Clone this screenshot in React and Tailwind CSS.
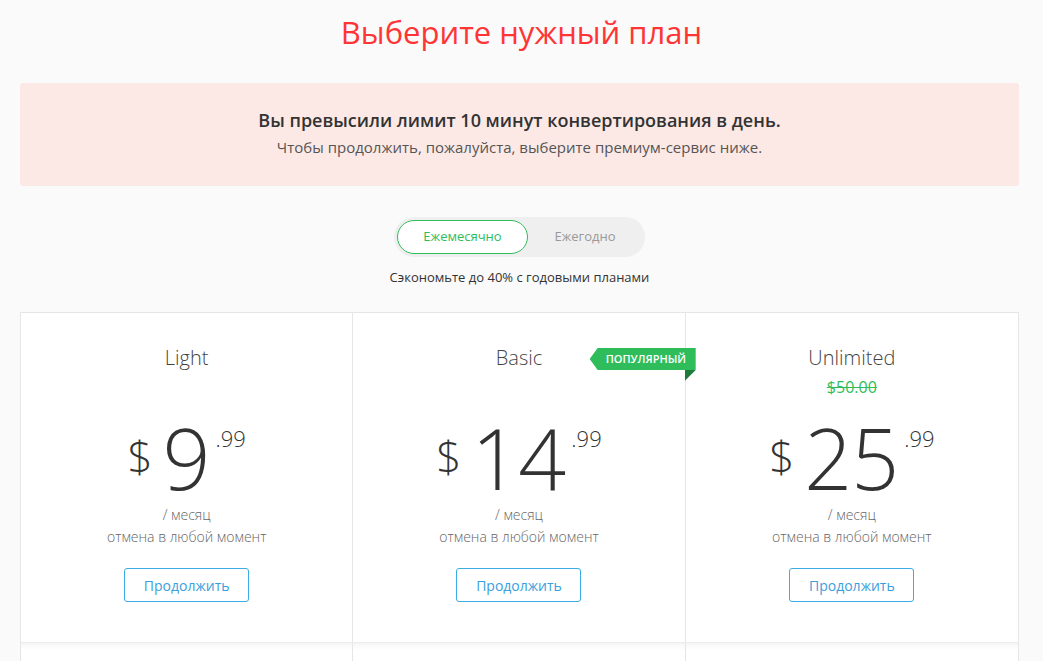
import { useState } from 'react';

const plans = [
  { name: 'Light', price: '9', old: null, popular: false },
  { name: 'Basic', price: '14', old: null, popular: true },
  { name: 'Unlimited', price: '25', old: '$50.00', popular: false },
];

function PopularBadge() {
  return (
    <div className="absolute top-[35px] right-[-11px] z-10">
      <div className="h-[22px] w-[106px] bg-[#2fbd5b] pl-[16px] text-[11px] leading-[22px] font-semibold text-white [clip-path:polygon(8px_0,100%_0,100%_100%,8px_100%,0_50%)]">
        ПОПУЛЯРНЫЙ
      </div>
      <div className="ml-auto h-[11px] w-[11px] bg-[#1c7a3a] [clip-path:polygon(0_0,100%_0,0_100%)]" />
    </div>
  );
}

function PlanCard({ plan, last }) {
  return (
    <div className={`relative flex flex-col items-center bg-white pt-[31px] pb-[40px] ${last ? '' : 'border-r border-[#e6e6e6]'}`}>
      {plan.popular && <PopularBadge />}
      <div className="text-[20px] leading-[28px] font-light text-[#444]">{plan.name}</div>
      <div className="h-[24px] mt-[3px] text-[16px] leading-[24px] text-[#2fbd5b] line-through">{plan.old}</div>
      <div className="mt-[17px] flex h-[84px] items-start text-[#333] font-light">
        <span className="mt-[18px] text-[44px] leading-none">$</span>
        <span className="ml-[10px] text-[84px] leading-none tracking-[-1px]">{plan.price}</span>
        <span className="ml-[6px] mt-[11px] text-[22px] leading-none">.99</span>
      </div>
      <div className="mt-[4px] text-center text-[14px] leading-[22px] font-light text-[#666]">
        <div>/ месяц</div>
        <div>отмена в любой момент</div>
      </div>
      <button className="mt-[20px] h-[34px] w-[125px] rounded-[3px] border border-[#3aaee2] text-[14px] text-[#3aa0dc]">
        Продолжить
      </button>
    </div>
  );
}

export default function App() {
  const [period, setPeriod] = useState('month');

  return (
    <div className="min-h-[661px] bg-[#fafafa] font-['Open_Sans',sans-serif] overflow-hidden">
      <h1 className="pt-[12px] text-center text-[31px] leading-[40px] text-[#ff3535]">Выберите нужный план</h1>

      <div className="ml-[20px] w-[999px]">
        <div className="mt-[31px] h-[103px] rounded-[3px] bg-[#fce9e6] pb-[4px] flex flex-col items-center justify-center">
          <div className="text-[18px] leading-[24px] font-semibold text-[#333]">
            Вы превысили лимит 10 минут конвертирования в день.
          </div>
          <div className="mt-[5px] text-[15px] leading-[20px] text-[#555]">
            Чтобы продолжить, пожалуйста, выберите премиум-сервис ниже.
          </div>
        </div>

        <div className="mt-[31px] flex justify-center">
          <div className="flex h-[40px] w-[251px] items-center rounded-full bg-[#efefef] p-[3px]">
            <button
              onClick={() => setPeriod('month')}
              className={`h-[34px] w-[131px] rounded-full text-[13px] ${period === 'month' ? 'bg-white border border-[#2fbd5b] text-[#2fbd5b]' : 'text-[#999]'}`}
            >
              Ежемесячно
            </button>
            <button
              onClick={() => setPeriod('year')}
              className={`h-[34px] flex-1 rounded-full text-[13px] ${period === 'year' ? 'bg-white border border-[#2fbd5b] text-[#2fbd5b]' : 'text-[#999]'}`}
            >
              Ежегодно
            </button>
          </div>
        </div>
        <div className="mt-[11px] text-center text-[13px] leading-[18px] text-[#333]">
          Сэкономьте до 40% с годовыми планами
        </div>

        <div className="mt-[26px] border border-[#e6e6e6]">
          <div className="grid grid-cols-3">
            {plans.map((p, i) => (
              <PlanCard key={p.name} plan={p} last={i === plans.length - 1} />
            ))}
          </div>
          <div className="grid grid-cols-3 border-t border-[#ececec]">
            {plans.map((p, i) => (
              <div
                key={p.name}
                className={`h-[40px] bg-white shadow-[inset_0_6px_6px_-4px_rgba(0,0,0,0.06)] ${i < 2 ? 'border-r border-[#e6e6e6]' : ''}`}
              />
            ))}
          </div>
        </div>
      </div>
    </div>
  );
}
